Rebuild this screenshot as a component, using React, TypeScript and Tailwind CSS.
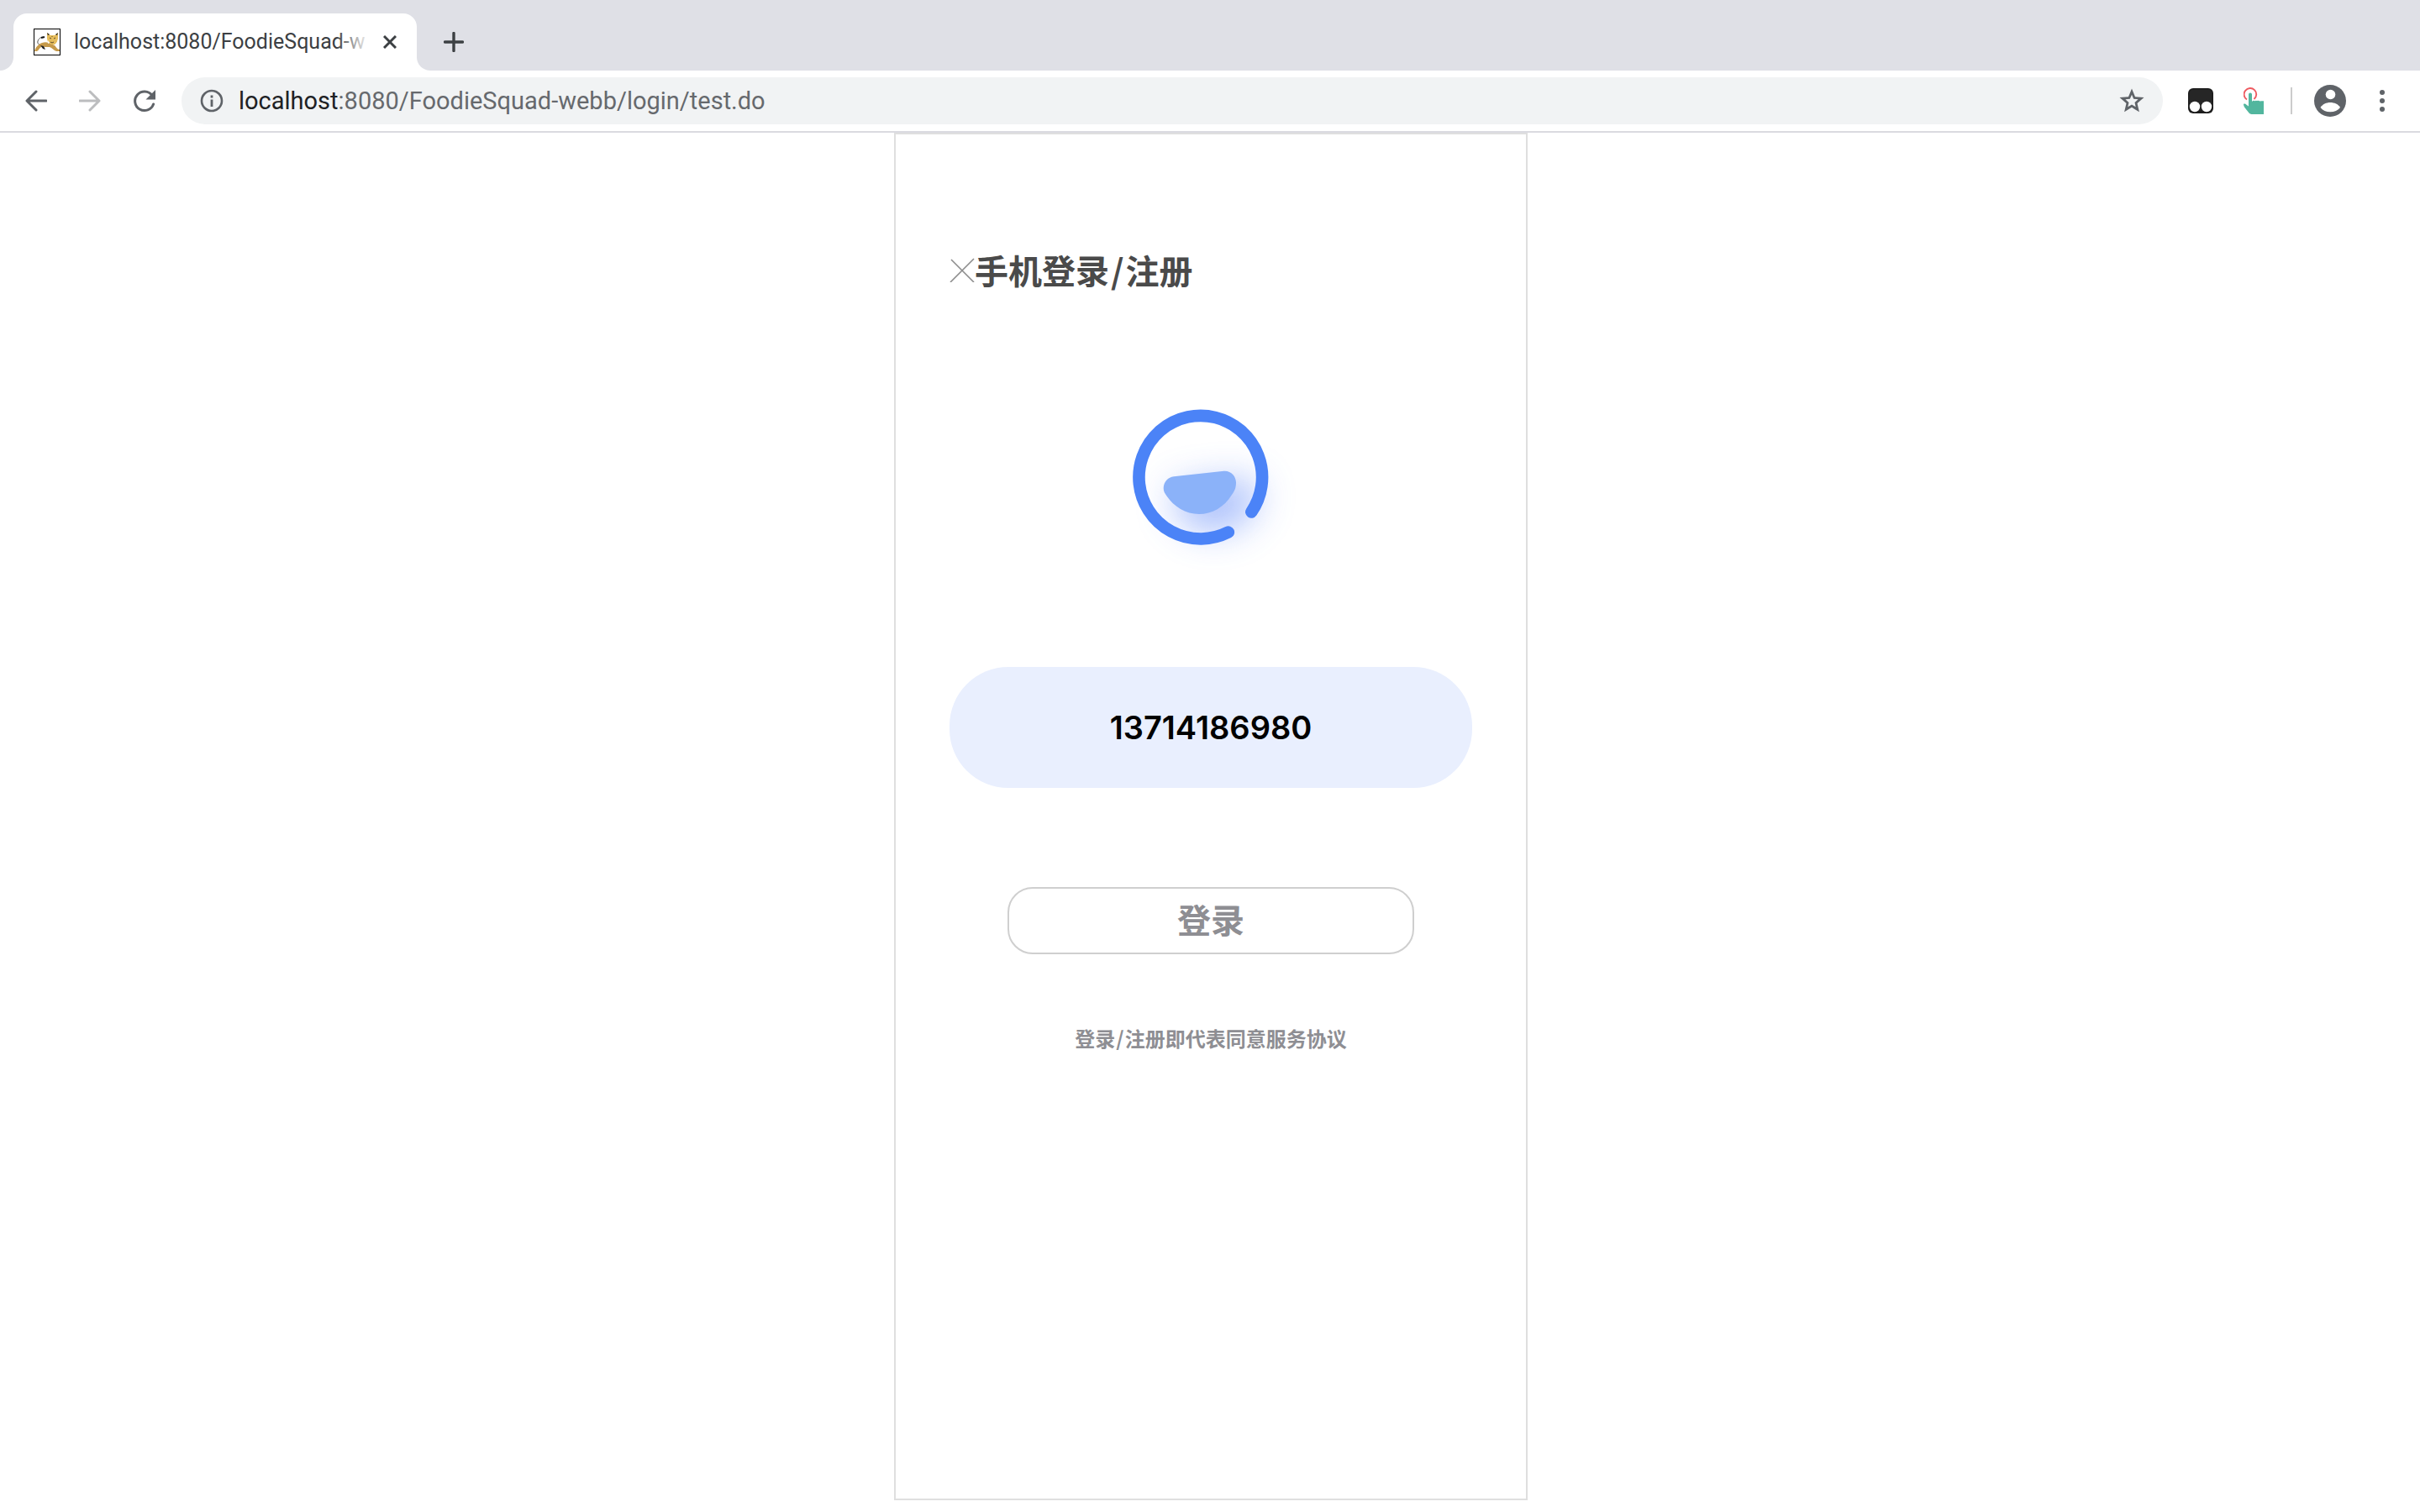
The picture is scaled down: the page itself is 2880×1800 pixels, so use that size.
import React from "react";

const UI_FONT = "font-['Roboto','Noto_Sans_CJK_SC',sans-serif]";
const CJK_FONT = "font-['Noto_Sans_CJK_SC','Noto_Sans',sans-serif]";

function Favicon() {
  return (
    <svg viewBox="0 0 32 36" className="h-9 w-8 shrink-0" aria-hidden="true">
      <g transform="translate(0 2)">
        <rect x="0.5" y="0.5" width="31" height="31" fill="#fff" stroke="#000" />
        <path d="M12 11c-1-2-6 0-7 4-1 3 2 5 5 5" fill="none" stroke="#555" strokeWidth="1" />
        <path d="M9 11l4-1" stroke="#111" strokeWidth="2" />
        <path d="M1 27c1-4 4-8 9-10 3-1 5-1 8 0l7 3c2 2 3 5 6 5v2h-4c-3-1-5-4-8-5l-4 0c-3 0-5-1-6 0-2 1-3 4-5 5z" fill="#c69a4a" />
        <path d="M16 5l4 3h5l4-3 0 7-1 4-3 3-4 0-4-3-1-4z" fill="#e6bd5c" />
        <path d="M16 5l3 2-2 1zM29 5l-3 2 2 1zM8 20l4 1 2 4-3-1z" fill="#222" />
        <path d="M19 11l2 1M26 11l-2 1M20 16l2 1 2-1M22 9v1" stroke="#5a4a2c" strokeWidth="1" fill="none" />
        <path d="M17 14l2 3-2 1zM29 13v4l-2 1z" fill="#fff" />
      </g>
    </svg>
  );
}

function CloseIcon() {
  return (
    <svg viewBox="0 0 16 16" className="size-4" aria-hidden="true">
      <path d="M1 1l14 14M15 1L1 15" stroke="#3c4043" strokeWidth="3" />
    </svg>
  );
}

function PlusIcon() {
  return (
    <svg viewBox="0 0 24 24" className="size-6" aria-hidden="true">
      <path d="M12 1.5v21M1.5 12h21" stroke="#3c4043" strokeWidth="3.4" strokeLinecap="round" />
    </svg>
  );
}

function ArrowIcon({ flip = false }: { flip?: boolean }) {
  return (
    <svg
      viewBox="0 0 26 26"
      className={flip ? "size-[26px] rotate-180 text-[#bcbdbf]" : "size-[26px] text-[#5f6368]"}
      aria-hidden="true"
    >
      <path
        d="M13 2L2 13l11 11M2.500 13H25"
        fill="none"
        stroke="currentColor"
        strokeWidth="3"
        strokeLinecap="round"
        strokeLinejoin="round"
      />
    </svg>
  );
}

function ReloadIcon() {
  return (
    <svg viewBox="0 0 28 28" className="size-7" aria-hidden="true">
      <path d="M23 7.500A11.300 11.300 0 1 0 24.600 18" fill="none" stroke="#5f6368" strokeWidth="3" strokeLinecap="round" />
      <path d="M27 1v11.500H15.500z" fill="#5f6368" />
    </svg>
  );
}

function InfoIcon() {
  return (
    <svg viewBox="0 0 28 28" className="size-7 shrink-0" aria-hidden="true">
      <circle cx="14" cy="14" r="12" fill="none" stroke="#5f6368" strokeWidth="2.600" />
      <path d="M14 12.500v8.500M14 7.500v3" stroke="#5f6368" strokeWidth="2.800" />
    </svg>
  );
}

function StarIcon() {
  return (
    <svg viewBox="0 0 30 30" className="size-[30px]" aria-hidden="true">
      <path
        fillRule="evenodd"
        fill="#5f6368"
        d="M15 .5l4 9.700 10.500.9-8 6.900 2.400 10.300L15 22.800l-8.900 5.500L8.500 18 .5 11.100 11 10.200zM15 7.800l-2.200 5-5.400.5 4.100 3.600-1.200 5.300 4.700-2.800 4.700 2.800-1.200-5.300 4.100-3.600-5.400-.5z"
      />
    </svg>
  );
}

function TampermonkeyIcon() {
  return (
    <svg viewBox="0 0 30 30" className="size-[30px]" aria-hidden="true">
      <rect width="30" height="30" rx="6" fill="#1c1c1c" />
      <rect x="1.500" y="1.500" width="27" height="25" rx="5" fill="#262626" />
      <circle cx="8" cy="22" r="6.200" fill="#fff" />
      <circle cx="22" cy="22" r="6.200" fill="#fff" />
    </svg>
  );
}

function TapIcon() {
  return (
    <svg viewBox="0 0 24 32" className="h-8 w-6" aria-hidden="true">
      <path d="M4 14.500A7.300 7.300 0 1 1 12.500 14" fill="none" stroke="#ee5a60" strokeWidth="1.900" />
      <path
        fill="#52b69e"
        d="M6 8.500a2 2 0 0 1 4 0V17l1-1q1.500-.8 2.500.3 1-1 2.500-.2.900-.8 2.500 0 1 .8 2 .2 1.500-.3 3.500 0V32H9.500a4 4 0 0 1-3-1.500L1 23.500Q-.5 20 0 19.800q2-.8 3.500 1L6 22.500z"
      />
    </svg>
  );
}

function AvatarIcon() {
  return (
    <svg viewBox="0 0 38 38" className="size-[38px]" aria-hidden="true">
      <circle cx="19" cy="19" r="19" fill="#5f6368" />
      <circle cx="19.500" cy="11.500" r="5.800" fill="#fff" />
      <path d="M7.500 27c2.500-4 7-6 11.700-6S29 23 31 27c-2.500 3.500-7 5.300-11.800 5.300S10 30.500 7.500 27z" fill="#fff" />
    </svg>
  );
}

function MenuDots() {
  return (
    <svg viewBox="0 0 6 28" className="h-7 w-1.5" aria-hidden="true">
      <g fill="#5f6368">
        <circle cx="3" cy="4" r="3" />
        <circle cx="3" cy="14" r="3" />
        <circle cx="3" cy="24" r="3" />
      </g>
    </svg>
  );
}

function BowlLogo() {
  return (
    <svg viewBox="0 0 220 220" className="size-[220px] overflow-visible" role="img" aria-label="FoodieSquad">
      <defs>
        <filter id="glow" x="-100%" y="-150%" width="300%" height="400%">
          <feGaussianBlur stdDeviation="19" />
        </filter>
      </defs>
      <path
        d="M76 107.300L135.500 100.700C144 100 150 107 150 114.500C150 121 148 125 145 129C136 144 121 152 106 152C90 152 76 143 67.500 130.500C65 127 63.700 125 63.700 121C63.700 114 69 108 76 107.300Z"
        transform="translate(-1 -7) scale(1.180)"
        fill="#4b78f8"
        opacity="0.5"
        filter="url(#glow)"
      />
      <path
        d="M168.300 149.500A73.300 73.300 0 1 0 140.800 173.600"
        fill="none"
        stroke="#4b83f7"
        strokeWidth="14.600"
        strokeLinecap="round"
      />
      <path
        d="M76 107.300L135.500 100.700C144 100 150 107 150 114.500C150 121 148 125 145 129C136 144 121 152 106 152C90 152 76 143 67.500 130.500C65 127 63.700 125 63.700 121C63.700 114 69 108 76 107.300Z"
        fill="#8bb2f9"
      />
    </svg>
  );
}

function TabStrip() {
  return (
    <header className="flex h-[84px] items-end bg-[#dfe0e6] pl-4">
      <div className="relative flex h-[68px] w-[480px] items-center rounded-t-2xl bg-white px-6">
        <span className="absolute bottom-0 -left-4 size-4 bg-white">
          <span className="block size-4 rounded-br-2xl bg-[#dfe0e6]" />
        </span>
        <span className="absolute -right-4 bottom-0 size-4 bg-white">
          <span className="block size-4 rounded-bl-2xl bg-[#dfe0e6]" />
        </span>
        <Favicon />
        <span className="relative ml-4 min-w-0 flex-1 text-[25px] leading-8 whitespace-nowrap text-[#3c4043]">
          localhost:8080/FoodieSquad-w
          <span className="absolute inset-y-0 right-0 w-10 bg-linear-to-r from-transparent to-white" />
        </span>
        <button type="button" aria-label="Close tab" className="ml-4">
          <CloseIcon />
        </button>
      </div>
      <button type="button" aria-label="New tab" className="ml-8 flex h-[68px] items-center">
        <PlusIcon />
      </button>
    </header>
  );
}

function Toolbar() {
  return (
    <nav className="flex h-[74px] items-center border-b-2 border-[#dadae0] bg-white pr-[42px] pl-[30px]">
      <div className="flex items-center gap-[38px]">
        <button type="button" aria-label="Back">
          <ArrowIcon />
        </button>
        <button type="button" aria-label="Forward" disabled>
          <ArrowIcon flip />
        </button>
        <button type="button" aria-label="Reload">
          <ReloadIcon />
        </button>
      </div>
      <div className="ml-[30px] flex h-14 min-w-0 flex-1 items-center rounded-full bg-[#f1f3f4] pr-[22px] pl-[22px]">
        <InfoIcon />
        <a href="#address" className="ml-[18px] min-w-0 flex-1 truncate text-[29px] leading-9 text-[#202124]">
          localhost<span className="text-[#66696d]">:8080/FoodieSquad-webb/login/test.do</span>
        </a>
        <button type="button" aria-label="Bookmark this page">
          <StarIcon />
        </button>
      </div>
      <div className="ml-[30px] flex items-center">
        <button type="button" aria-label="Tampermonkey">
          <TampermonkeyIcon />
        </button>
        <button type="button" aria-label="Tap extension" className="ml-9">
          <TapIcon />
        </button>
        <span className="ml-8 h-8 w-0.5 bg-[#cccccc]" />
        <button type="button" aria-label="Profile" className="ml-[26px]">
          <AvatarIcon />
        </button>
        <button type="button" aria-label="Menu" className="ml-10">
          <MenuDots />
        </button>
      </div>
    </nav>
  );
}

function LoginPanel() {
  return (
    <section
      className={`flex w-full max-w-[754px] flex-col border-2 border-[#dfdfdf] px-16 pt-[131px] font-bold ${CJK_FONT}`}
    >
      <div className="flex items-center">
        <button type="button" aria-label="关闭">
          <svg viewBox="0 0 30 30" className="size-[30px]" aria-hidden="true">
            <path d="M2 3l27 27M29 2L1 30" stroke="#8c8c8c" strokeWidth="1.600" />
          </svg>
        </button>
        <h1 className="text-[40px] leading-[60px] text-[#4a4a4a]">
          手机登录<span className="mx-0.5">/</span>注册
        </h1>
      </div>
      <form className="flex flex-col items-center" onSubmit={(e) => e.preventDefault()}>
        <div className="mt-[109px] mr-5">
          <BowlLogo />
        </div>
        <input
          type="tel"
          aria-label="手机号"
          defaultValue="13714186980"
          className="mt-[114px] h-36 w-full rounded-[70px] bg-[#e9effe] text-center font-['Inter',sans-serif] text-[38px] font-semibold text-black outline-none"
        />
        <button
          type="submit"
          className="mt-[118px] flex h-20 w-full max-w-[484px] items-center justify-center rounded-[30px] border-2 border-[#cfcfcf] pb-1 text-[40px] leading-[60px] text-[#8e8e93]"
        >
          登录
        </button>
        <p className="mt-[82px] text-2xl leading-9 text-[#8e8e93]">
          登录<span className="mx-px">/</span>注册即代表同意服务协议
        </p>
      </form>
    </section>
  );
}

export default function App() {
  return (
    <div className={`flex min-h-screen flex-col bg-white ${UI_FONT}`}>
      <TabStrip />
      <Toolbar />
      <main className="flex flex-1 justify-center pb-3.5 pl-0.5">
        <LoginPanel />
      </main>
    </div>
  );
}
